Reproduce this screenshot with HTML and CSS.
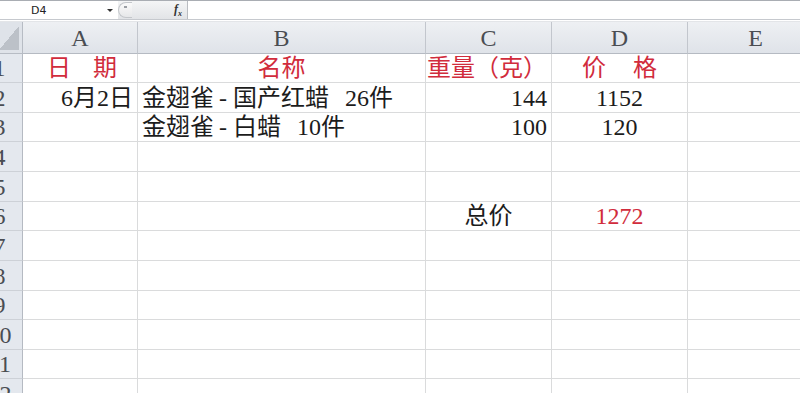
FILE: index.html
```html
<!DOCTYPE html>
<html>
<head>
  <title>Sheet1</title>
  <link rel="stylesheet" href="styles.css">
</head>
<body>
  <div class="formula-bar">
    <div class="name-box">
      <span class="name">D4</span>
      <span class="arrow"></span>
    </div>
    <div class="fx-zone">
      <span class="grip"><span class="dot"></span></span>
      <span class="fx">f<sub>x</sub></span>
    </div>
    <div class="formula-input"></div>
  </div>

  <div class="sheet">
    <!-- column headers -->
    <div class="corner"></div>
    <div class="col-head">A</div>
    <div class="col-head">B</div>
    <div class="col-head">C</div>
    <div class="col-head">D</div>
    <div class="col-head">E</div>

    <!-- row 1 -->
    <div class="row-head">1</div>
    <div class="cell red spread spread-a"><span>日</span><span>期</span></div>
    <div class="cell red center">名称</div>
    <div class="cell red left tight">重量（克）</div>
    <div class="cell red spread spread-d"><span>价</span><span>格</span></div>
    <div class="cell"></div>

    <!-- row 2 -->
    <div class="row-head">2</div>
    <div class="cell right">6月2日</div>
    <div class="cell left item">金翅雀<span class="dash">-</span>国产红蜡 26件</div>
    <div class="cell right">144</div>
    <div class="cell center">1152</div>
    <div class="cell"></div>

    <!-- row 3 -->
    <div class="row-head">3</div>
    <div class="cell"></div>
    <div class="cell left item">金翅雀<span class="dash">-</span>白蜡 10件</div>
    <div class="cell right">100</div>
    <div class="cell center">120</div>
    <div class="cell"></div>

    <!-- row 4 -->
    <div class="row-head">4</div>
    <div class="cell"></div>
    <div class="cell"></div>
    <div class="cell"></div>
    <div class="cell"></div>
    <div class="cell"></div>

    <!-- row 5 -->
    <div class="row-head">5</div>
    <div class="cell"></div>
    <div class="cell"></div>
    <div class="cell"></div>
    <div class="cell"></div>
    <div class="cell"></div>

    <!-- row 6 -->
    <div class="row-head">6</div>
    <div class="cell"></div>
    <div class="cell"></div>
    <div class="cell center">总价</div>
    <div class="cell red center">1272</div>
    <div class="cell"></div>

    <!-- rows 7 - 12 -->
    <div class="row-head">7</div>
    <div class="cell"></div><div class="cell"></div><div class="cell"></div><div class="cell"></div><div class="cell"></div>
    <div class="row-head">8</div>
    <div class="cell"></div><div class="cell"></div><div class="cell"></div><div class="cell"></div><div class="cell"></div>
    <div class="row-head">9</div>
    <div class="cell"></div><div class="cell"></div><div class="cell"></div><div class="cell"></div><div class="cell"></div>
    <div class="row-head">10</div>
    <div class="cell"></div><div class="cell"></div><div class="cell"></div><div class="cell"></div><div class="cell"></div>
    <div class="row-head">11</div>
    <div class="cell"></div><div class="cell"></div><div class="cell"></div><div class="cell"></div><div class="cell"></div>
    <div class="row-head">12</div>
    <div class="cell"></div><div class="cell"></div><div class="cell"></div><div class="cell"></div><div class="cell"></div>
  </div>
</body>
</html>
```

FILE: styles.css
```css
html,
body {
  margin: 0;
  padding: 0;
  height: 393px;
  overflow: hidden;
  background-color: #FFF;
}

body {
  font-family: "Liberation Serif", "Noto Sans CJK SC", serif;
  color: #1c1c1c;
}

/* formula bar */
.formula-bar {
  display: flex;
  height: 18px;
  border-top: 1px solid #a9adb3;
  border-bottom: 1px solid #c6c9ce;
  background-color: #FFF;
}

.name-box {
  width: 118px;
  display: flex;
  align-items: center;
  padding-left: 31px;
  box-sizing: border-box;
}

.name {
  font-family: "DejaVu Sans", sans-serif;
  font-size: 11px;
  color: #222;
  flex: 1;
}

.arrow {
  width: 0;
  height: 0;
  margin-right: 5px;
  border-left: 3px solid transparent;
  border-right: 3px solid transparent;
  border-top: 3px solid #333;
}

.fx-zone {
  width: 70px;
  display: flex;
  align-items: center;
  justify-content: space-between;
  background: linear-gradient(#f4f5f6, #e2e4e7);
  border-right: 1px solid #b9bcc1;
  box-sizing: border-box;
}

.grip {
  width: 14px;
  height: 16px;
  border: 1px solid #c4c7cb;
  border-right: none;
  border-radius: 8px 0 0 8px;
  background: linear-gradient(#fafafa, #e6e7e9);
  display: flex;
  align-items: center;
  justify-content: center;
  box-sizing: border-box;
}

.dot {
  width: 3px;
  height: 2px;
  margin-top: -6px;
  background-color: #9a9ea4;
}

.fx {
  font-family: "Liberation Serif", serif;
  font-style: italic;
  font-weight: bold;
  font-size: 12px;
  color: #333;
  margin-right: 5px;
}

.fx sub {
  font-size: 8px;
}

.formula-input {
  flex: 1;
  background-color: #FFF;
}

/* grid */
.sheet {
  display: grid;
  grid-template-columns: 46px 115px 288px 126px 136px 136px;
  grid-template-rows: 32px 29px 30px 29px 30px 30px 29px 30px 30px 29px 30px 29px 30px;
  margin-left: -23px;
  margin-top: 1px;
  border-top: 1px solid #e3e5e8;
}

.corner {
  background-color: #dfe3e9;
  background-image: linear-gradient(to bottom right, transparent 50%, #bcc1c8 50%);
  background-repeat: no-repeat;
  background-size: 20px 24px;
  background-position: right 3px bottom 3px;
  border-right: 1px solid #b7bcc4;
  border-bottom: 1px solid #b7bcc4;
}

.col-head {
  display: flex;
  align-items: center;
  justify-content: center;
  font-size: 24px;
  line-height: 26px;
  color: #4a4d52;
  background: linear-gradient(#eef0f3, #dfe3e9);
  border-right: 1px solid #c2c6cd;
  border-bottom: 1px solid #b5bac2;
}

.row-head {
  display: flex;
  align-items: center;
  justify-content: center;
  font-size: 24px;
  line-height: 26px;
  color: #4a4d52;
  background-color: #e4e8ee;
  border-right: 1px solid #b5bac2;
  border-bottom: 1px solid #cdd1d7;
}

.cell {
  display: flex;
  align-items: center;
  padding: 0 4px;
  font-size: 24px;
  line-height: 26px;
  white-space: pre;
  border-right: 1px solid #dadbdc;
  border-bottom: 1px solid #dadbdc;
}

/* text in column B uses the wide half-width spacing */
.item {
  word-spacing: 10px;
}

.dash {
  padding: 0 6px 0 5px;
}

.red {
  color: #d12c3c;
}

.left {
  justify-content: flex-start;
}

.tight {
  padding-left: 1px;
}

.right {
  justify-content: flex-end;
}

.center {
  justify-content: center;
}

.spread {
  justify-content: space-between;
}

.spread-a {
  padding: 0 20px 0 24px;
}

.spread-d {
  padding: 0 30px 0 30px;
}
```
